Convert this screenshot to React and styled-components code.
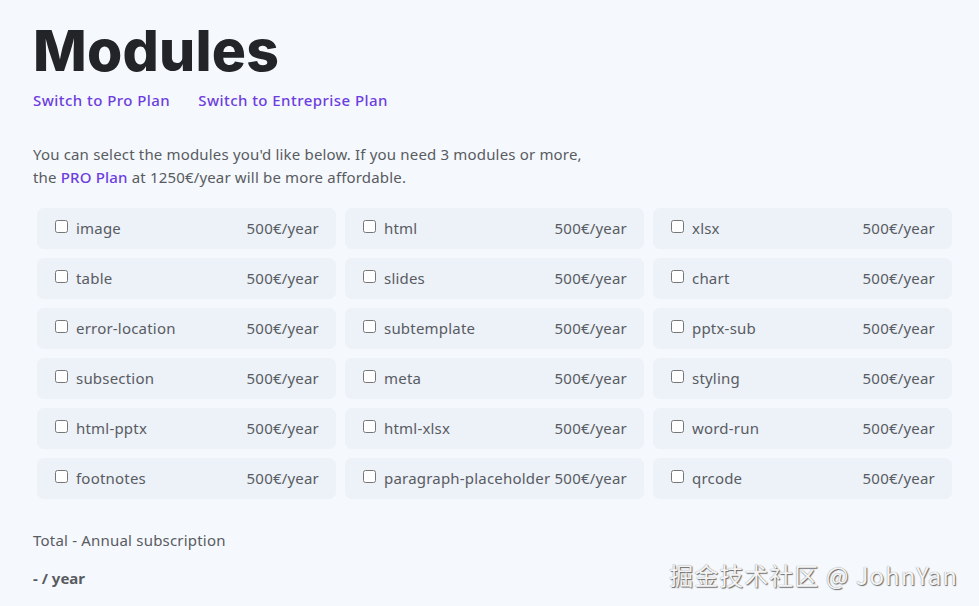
import styled, { createGlobalStyle } from "styled-components";

const GlobalStyle = createGlobalStyle`
  html, body {
    margin: 0;
    background: #f5f8fc;
  }
  body {
    font-family: "Noto Sans", "Liberation Sans", sans-serif;
    color: #585c62;
  }
`;

const modules = [
  "image", "html", "xlsx",
  "table", "slides", "chart",
  "error-location", "subtemplate", "pptx-sub",
  "subsection", "meta", "styling",
  "html-pptx", "html-xlsx", "word-run",
  "footnotes", "paragraph-placeholder", "qrcode",
];

const App = () => {
  return (
    <>
      <GlobalStyle />
      <Page>
        <Title>Modules</Title>

        <Links>
          <Link href="#">Switch to Pro Plan</Link>
          <Link href="#">Switch to Entreprise Plan</Link>
        </Links>

        <Intro>
          You can select the modules you'd like below. If you need 3 modules or more,
          <br />
          the <Link href="#">PRO Plan</Link> at 1250€/year will be more affordable.
        </Intro>

        <Grid>
          {modules.map((name) => (
            <Card key={name}>
              <Check type="checkbox" />
              <Name>{name}</Name>
              <Price>500€/year</Price>
            </Card>
          ))}
        </Grid>

        <Total>Total - Annual subscription</Total>
        <Amount>- / year</Amount>
      </Page>

      <Watermark>掘金技术社区 @ JohnYan</Watermark>
    </>
  );
};

export default App;

const Page = styled.div`
  width: 923px;
  padding: 14px 0 0 33px;
  height: 592px;
  box-sizing: content-box;
  overflow: hidden;
`;

const Title = styled.h1`
  margin: 0;
  font-family: Inter, "Noto Sans", sans-serif;
  font-weight: 800;
  font-size: 57px;
  line-height: 74px;
  letter-spacing: 0.2px;
  color: #222427;
`;

const Links = styled.div`
  display: flex;
  gap: 28px;
  margin-top: 1px;
  font-size: 15px;
  line-height: 22px;
  letter-spacing: 0.45px;
`;

const Link = styled.a`
  color: #6c3ee0;
  text-decoration: none;
  font-weight: 500;
`;

const Intro = styled.p`
  margin: 32px 0 0;
  font-size: 15px;
  line-height: 23px;
  letter-spacing: 0.17px;
`;

const Grid = styled.div`
  display: grid;
  grid-template-columns: repeat(3, 299px);
  column-gap: 9px;
  row-gap: 9px;
  padding: 0 4px;
  margin-top: 19px;
`;

const Card = styled.label`
  display: flex;
  align-items: center;
  height: 41px;
  padding: 0 17px 2px 18px;
  background: #edf1f8;
  border-radius: 7px;
  font-size: 15px;
  letter-spacing: 0.2px;
  box-sizing: border-box;
`;

const Check = styled.input`
  margin: 0 8px 0 0;
  width: 13px;
  height: 13px;
  position: relative;
  top: -1px;
`;

const Name = styled.span`
  flex: 1;
  white-space: nowrap;
`;

const Price = styled.span`
  white-space: nowrap;
`;

const Total = styled.p`
  margin: 30px 0 0;
  font-size: 15px;
  line-height: 22px;
  letter-spacing: 0.2px;
`;

const Amount = styled.p`
  margin: 16px 0 0;
  font-size: 15px;
  font-weight: 700;
  line-height: 22px;
`;

const Watermark = styled.div`
  position: absolute;
  right: 21px;
  top: 557px;
  font-family: "Noto Sans CJK SC", "Liberation Sans", sans-serif;
  font-size: 24px;
  color: #f4f4f4;
  text-shadow: 1px 1px 1px #6a6a6a, 0 0 1px #888;
  letter-spacing: 1px;
`;
